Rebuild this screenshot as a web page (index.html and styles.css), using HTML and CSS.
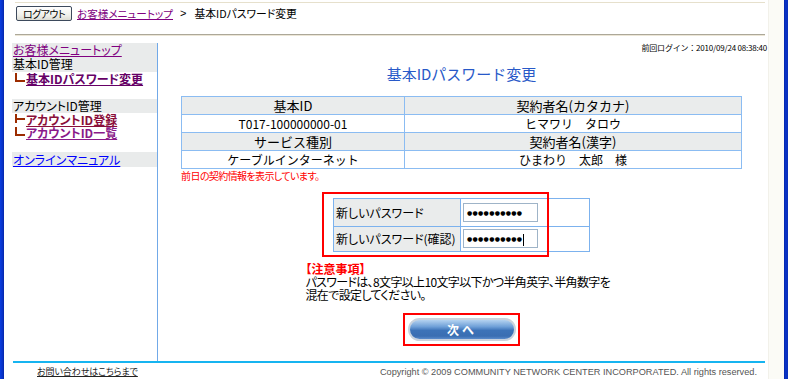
FILE: index.html
```html
<!DOCTYPE html>
<html lang="ja">
<head>
<meta charset="utf-8">
<title>基本IDパスワード変更</title>
<link rel="stylesheet" href="styles.css">
</head>
<body>
<div class="window">
  <div class="frame-l"></div>
  <div class="page">
    <div class="topbar">
      <span class="logout">ログアウト</span>
      <a class="crumb" href="#">お客様メニュートップ</a>
      <span class="sep">&gt;</span>
      <span class="current">基本IDパスワード変更</span>
    </div>
    <div class="body">
      <nav class="side">
        <div class="grp grp-first">
          <a class="lnk visited" href="#">お客様メニュートップ</a>
          <div class="head">基本ID管理</div>
        </div>
        <div class="sub"><span class="corner"></span><a class="sublnk" href="#">基本IDパスワード変更</a></div>
        <div class="grp grp-mid"><div class="head">アカウントID管理</div></div>
        <div class="sub"><span class="corner tee"></span><a class="sublnk red" href="#">アカウントID登録</a></div>
        <div class="sub"><span class="corner"></span><a class="sublnk light" href="#">アカウントID一覧</a></div>
        <div class="grp grp-last"><a class="lnk blue" href="#">オンラインマニュアル</a></div>
      </nav>
      <main class="main">
        <div class="login">前回ログイン：2010/09/24 08:38:40</div>
        <h1 class="title">基本IDパスワード変更</h1>
        <div class="info-wrap">
          <table class="info">
            <tr class="hd"><td class="c1">基本ID</td><td>契約者名(カタカナ)</td></tr>
            <tr><td class="c1">T017-100000000-01</td><td>ヒマワリ　タロウ</td></tr>
            <tr class="hd"><td class="c1">サービス種別</td><td>契約者名(漢字)</td></tr>
            <tr><td class="c1">ケーブルインターネット</td><td>ひまわり　太郎　様</td></tr>
          </table>
          <div class="note">前日の契約情報を表示しています。</div>
        </div>
        <div class="pw-wrap">
          <table class="pw">
            <tr class="r1"><td class="lbl">新しいパスワード</td><td class="fld"><span class="input">●●●●●●●●●●</span></td></tr>
            <tr class="r2"><td class="lbl">新しいパスワード(確認)</td><td class="fld"><span class="input">●●●●●●●●●●<i class="caret"></i></span></td></tr>
          </table>
          <div class="hilite pw-hl"></div>
        </div>
        <div class="notice">
          <div class="notice-h">【注意事項】</div>
          <div>パスワードは、8文字以上10文字以下かつ半角英字、半角数字を</div>
          <div>混在で設定してください。</div>
        </div>
        <div class="btn-wrap">
          <span class="next">次へ</span>
          <div class="hilite btn-hl"></div>
        </div>
      </main>
    </div>
    <footer class="foot">
      <a class="contact" href="#">お問い合わせはこちらまで</a>
      <span class="copy">Copyright © 2009 COMMUNITY NETWORK CENTER INCORPORATED. All rights reserved.</span>
    </footer>
  </div>
  <div class="scroll"></div>
  <div class="frame-r"></div>
</div>
</body>
</html>
```

FILE: styles.css
```css
html, body {
  margin: 0;
  padding: 0;
  background: #ffffff;
}
body {
  width: 788px;
  height: 379px;
  overflow: hidden;
  font-family: "Noto Sans CJK JP", "Noto Sans", sans-serif;
  font-size: 12px;
  color: #000;
}
a { text-decoration: underline; }

.window {
  display: flex;
  width: 788px;
  height: 379px;
}
.frame-l {
  width: 4px;
  background: linear-gradient(to right, #0a3ee0, #0833c8 60%, #0626a8);
}
.frame-r {
  width: 4px;
  background: linear-gradient(to right, #0626a8, #0833c8 40%, #0a2fb8);
}
.scroll {
  width: 16px;
  background: #fbfbf6;
  border-left: 1px solid #f2f1ea;
  box-sizing: border-box;
}
.page {
  flex: 1;
  display: flex;
  flex-direction: column;
  min-width: 0;
}

/* top bar */
.topbar {
  margin: 2px 3px 0 11px;
  height: 28px;
  border-top: 1px solid #e6e0cc;
  border-bottom: 1px solid #aca899;
  box-shadow: 0 1px 0 #ece6d6;
  display: flex;
  align-items: flex-start;
  padding: 3px 0 0 1px;
  box-sizing: content-box;
  font-feature-settings: "palt";
}
.logout {
  display: inline-block;
  width: 54px;
  height: 13px;
  border: 1px solid #3d4a5c;
  border-radius: 2px;
  background: linear-gradient(#ffffff, #f1f1ec 60%, #dcdcd4);
  font-size: 10px;
  line-height: 13px;
  text-align: center;
  letter-spacing: -0.5px;
  margin-right: 5px;
}
.crumb {
  color: #800080;
  font-size: 10.6px;
  line-height: 15px;
}
.sep {
  margin: 0 8px 0 7px;
  font-family: "Liberation Sans", sans-serif;
  font-size: 11px;
  line-height: 15px;
}
.current {
  font-size: 10.8px;
  line-height: 15px;
}

/* body */
.body {
  display: flex;
  margin: 8px 3px 0 8px;
  height: 320px;
}
.side {
  width: 145px;
  border-right: 1px solid #71a9e8;
  font-size: 12px;
  line-height: 14px;
  font-feature-settings: "palt";
}
.grp {
  background: #e9ebeb;
  padding-left: 1px;
}
.grp-first { height: 29px; }
.grp-mid { margin-top: 14px; height: 14px; }
.grp-last { margin-top: 13px; height: 15px; line-height: 15px; }
.lnk { display: block; }
.visited { color: #800080; }
.blue { color: #0000ff; }
.head { color: #000; }
.sub {
  display: flex;
  align-items: flex-start;
  padding-left: 3px;
  height: 13px;
  line-height: 13px;
}
.corner {
  position: relative;
  display: inline-block;
  width: 8px;
  height: 7px;
  margin-top: 1px;
  margin-right: 1px;
  border-left: 2px solid #9c2c00;
  border-bottom: 2px solid #9c2c00;
}
.corner.tee {
  border-bottom: none;
  height: 9px;
}
.corner.tee::after {
  content: "";
  position: absolute;
  left: 0;
  top: 4px;
  width: 8px;
  height: 2px;
  background: #9c2c00;
}
.sublnk {
  font-weight: bold;
  color: #660066;
}
.sublnk.red { color: #8a0f3a; }
.sublnk.light { color: #8a1a8a; }

/* main */
.main {
  flex: 1;
  min-width: 0;
  display: flex;
  flex-direction: column;
  align-items: center;
}
.login {
  align-self: flex-end;
  margin-right: -2px;
  font-size: 8px;
  line-height: 10px;
  letter-spacing: -0.2px;
  color: #000;
}
.title {
  margin: 12px 0 0;
  font-size: 15px;
  line-height: 18px;
  font-weight: normal;
  color: #2859c8;
}
.info-wrap {
  width: 561px;
  margin-top: 13px;
}
.info {
  width: 561px;
  border-collapse: collapse;
  border: 1px solid #5fa4f0;
  font-size: 12px;
}
.info td {
  border: 1px solid #8bbcf2;
  height: 17px;
  line-height: 17px;
  padding: 0;
  text-align: center;
}
.info .c1 { width: 222px; }
.info tr.hd td { background: #eaecec; font-size: 13px; }
.note {
  color: #ff0000;
  font-size: 10px;
  letter-spacing: -0.6px;
  line-height: 12px;
  margin-top: 1px;
  font-feature-settings: "palt";
}
.pw-wrap {
  position: relative;
  margin-top: 16px;
  width: 257px;
}
.pw {
  width: 257px;
  border-collapse: collapse;
  border: 1px solid #7cb2ee;
  font-size: 12px;
}
.pw td {
  border: 1px solid #7cb2ee;
  padding: 0;
}
.pw .lbl {
  width: 124px;
  background: #eaecec;
  padding-left: 2px;
  text-align: left;
  font-feature-settings: "palt";
}
.pw .r1 td { height: 27px; }
.pw .r2 td { height: 24px; }
.pw .fld { padding-left: 2px; }
.input {
  position: relative;
  display: block;
  width: 70px;
  height: 17px;
  border: 1px solid #9fb4c8;
  font-family: "DejaVu Sans", sans-serif;
  font-size: 6px;
  line-height: 17px;
  letter-spacing: 0.3px;
  padding-left: 3px;
  box-sizing: content-box;
  white-space: nowrap;
  overflow: hidden;
}
.caret {
  display: inline-block;
  width: 1px;
  height: 12px;
  background: #000;
  vertical-align: middle;
  margin-left: 1px;
}
.hilite {
  position: absolute;
  border: 2px solid #ff0000;
  box-sizing: border-box;
  pointer-events: none;
}
.pw-hl {
  left: -11px;
  top: -6px;
  width: 227px;
  height: 65px;
}
.notice {
  margin-top: 10px;
  width: 312px;
  font-size: 12px;
  line-height: 13px;
  letter-spacing: -0.65px;
  white-space: nowrap;
  font-feature-settings: "palt";
}
.notice-h {
  color: #ff0000;
  font-weight: bold;
  letter-spacing: 0;
}
.btn-wrap {
  position: relative;
  margin-top: 17px;
  width: 108px;
  height: 23px;
  margin-left: 1px;
}
.next {
  display: block;
  width: 108px;
  height: 23px;
  box-sizing: border-box;
  border-radius: 12px;
  border: 2px solid #c9d3de;
  background: linear-gradient(#b4d2f0 0%, #6fa0d8 35%, #3c73b8 55%, #3a6eb2 85%, #5a8ccc 100%);
  color: #fff;
  font-weight: bold;
  font-size: 12px;
  line-height: 19px;
  text-align: center;
  letter-spacing: 3px;
}
.btn-hl {
  left: -5px;
  top: -5px;
  width: 117px;
  height: 33px;
}

/* footer */
.foot {
  margin: 0 3px 0 9px;
  border-top: 2px solid #16b4f0;
  height: 16px;
  display: flex;
  align-items: center;
  justify-content: space-between;
  padding: 0 8px 0 24px;
}
.contact {
  color: #222;
  font-size: 9px;
  letter-spacing: -0.1px;
  line-height: 12px;
  font-feature-settings: "palt";
  margin-top: 2px;
}
.copy {
  font-family: "Liberation Sans", sans-serif;
  font-size: 9.2px;
  color: #555;
  margin-top: 1px;
}
```
